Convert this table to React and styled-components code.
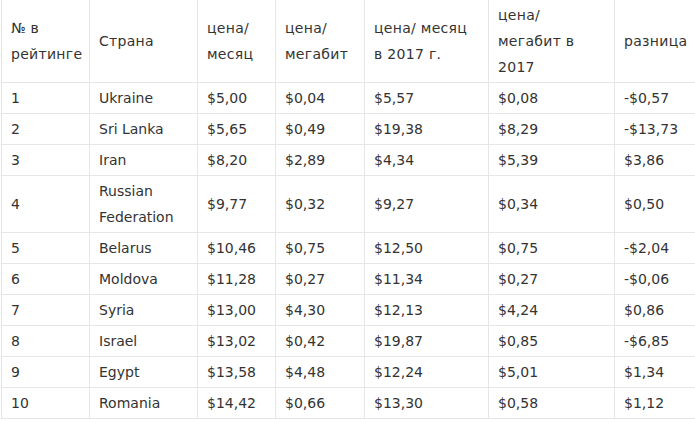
import React from "react";
import styled, { createGlobalStyle } from "styled-components";

const Global = createGlobalStyle`
  html, body { margin: 0; padding: 0; background: #fff; overflow: hidden; }
  body { width: 695px; height: 423px; }
`;

const Wrap = styled.div`
  width: 695px;
  height: 423px;
  overflow: hidden;
  background: #fff;
`;

const Table = styled.table`
  border-collapse: collapse;
  table-layout: fixed;
  width: 760px;
  margin-left: 1px;
  margin-top: -1px;
  font-family: "DejaVu Sans", Verdana, sans-serif;
  font-size: 14px;
  line-height: 26px;
  color: #333;
`;

const Cell = styled.td`
  border: 1px solid #e6e6e6;
  padding: 2px 10px 2px 9px;
  vertical-align: middle;
  text-align: left;
  font-weight: normal;
  white-space: nowrap;
`;

const HeadCell = styled(Cell).attrs({ as: "th" })`
  letter-spacing: 0.3px;
`;

const Line = styled.span`
  display: block;
`;

const columns = [88, 108, 78, 89, 124, 126, 147];

const header = [
  ["№ в", "рейтинге"],
  ["Страна"],
  ["цена/", "месяц"],
  ["цена/", "мегабит"],
  ["цена/ месяц", "в 2017 г."],
  ["цена/", "мегабит в", "2017"],
  ["разница"],
];

const rows = [
  ["1", "Ukraine", "$5,00", "$0,04", "$5,57", "$0,08", "-$0,57"],
  ["2", "Sri Lanka", "$5,65", "$0,49", "$19,38", "$8,29", "-$13,73"],
  ["3", "Iran", "$8,20", "$2,89", "$4,34", "$5,39", "$3,86"],
  ["4", ["Russian", "Federation"], "$9,77", "$0,32", "$9,27", "$0,34", "$0,50"],
  ["5", "Belarus", "$10,46", "$0,75", "$12,50", "$0,75", "-$2,04"],
  ["6", "Moldova", "$11,28", "$0,27", "$11,34", "$0,27", "-$0,06"],
  ["7", "Syria", "$13,00", "$4,30", "$12,13", "$4,24", "$0,86"],
  ["8", "Israel", "$13,02", "$0,42", "$19,87", "$0,85", "-$6,85"],
  ["9", "Egypt", "$13,58", "$4,48", "$12,24", "$5,01", "$1,34"],
  ["10", "Romania", "$14,42", "$0,66", "$13,30", "$0,58", "$1,12"],
];

const renderLines = (v) =>
  Array.isArray(v) ? v.map((l, k) => <Line key={k}>{l}</Line>) : v;

export default function App() {
  return (
    <Wrap>
      <Global />
      <Table>
        <colgroup>
          {columns.map((w, i) => (
            <col key={i} style={{ width: w }} />
          ))}
        </colgroup>
        <thead>
          <tr>
            {header.map((h, i) => (
              <HeadCell key={i}>{renderLines(h)}</HeadCell>
            ))}
          </tr>
        </thead>
        <tbody>
          {rows.map((r, i) => (
            <tr key={i}>
              {r.map((c, j) => (
                <Cell key={j}>{renderLines(c)}</Cell>
              ))}
            </tr>
          ))}
        </tbody>
      </Table>
    </Wrap>
  );
}
